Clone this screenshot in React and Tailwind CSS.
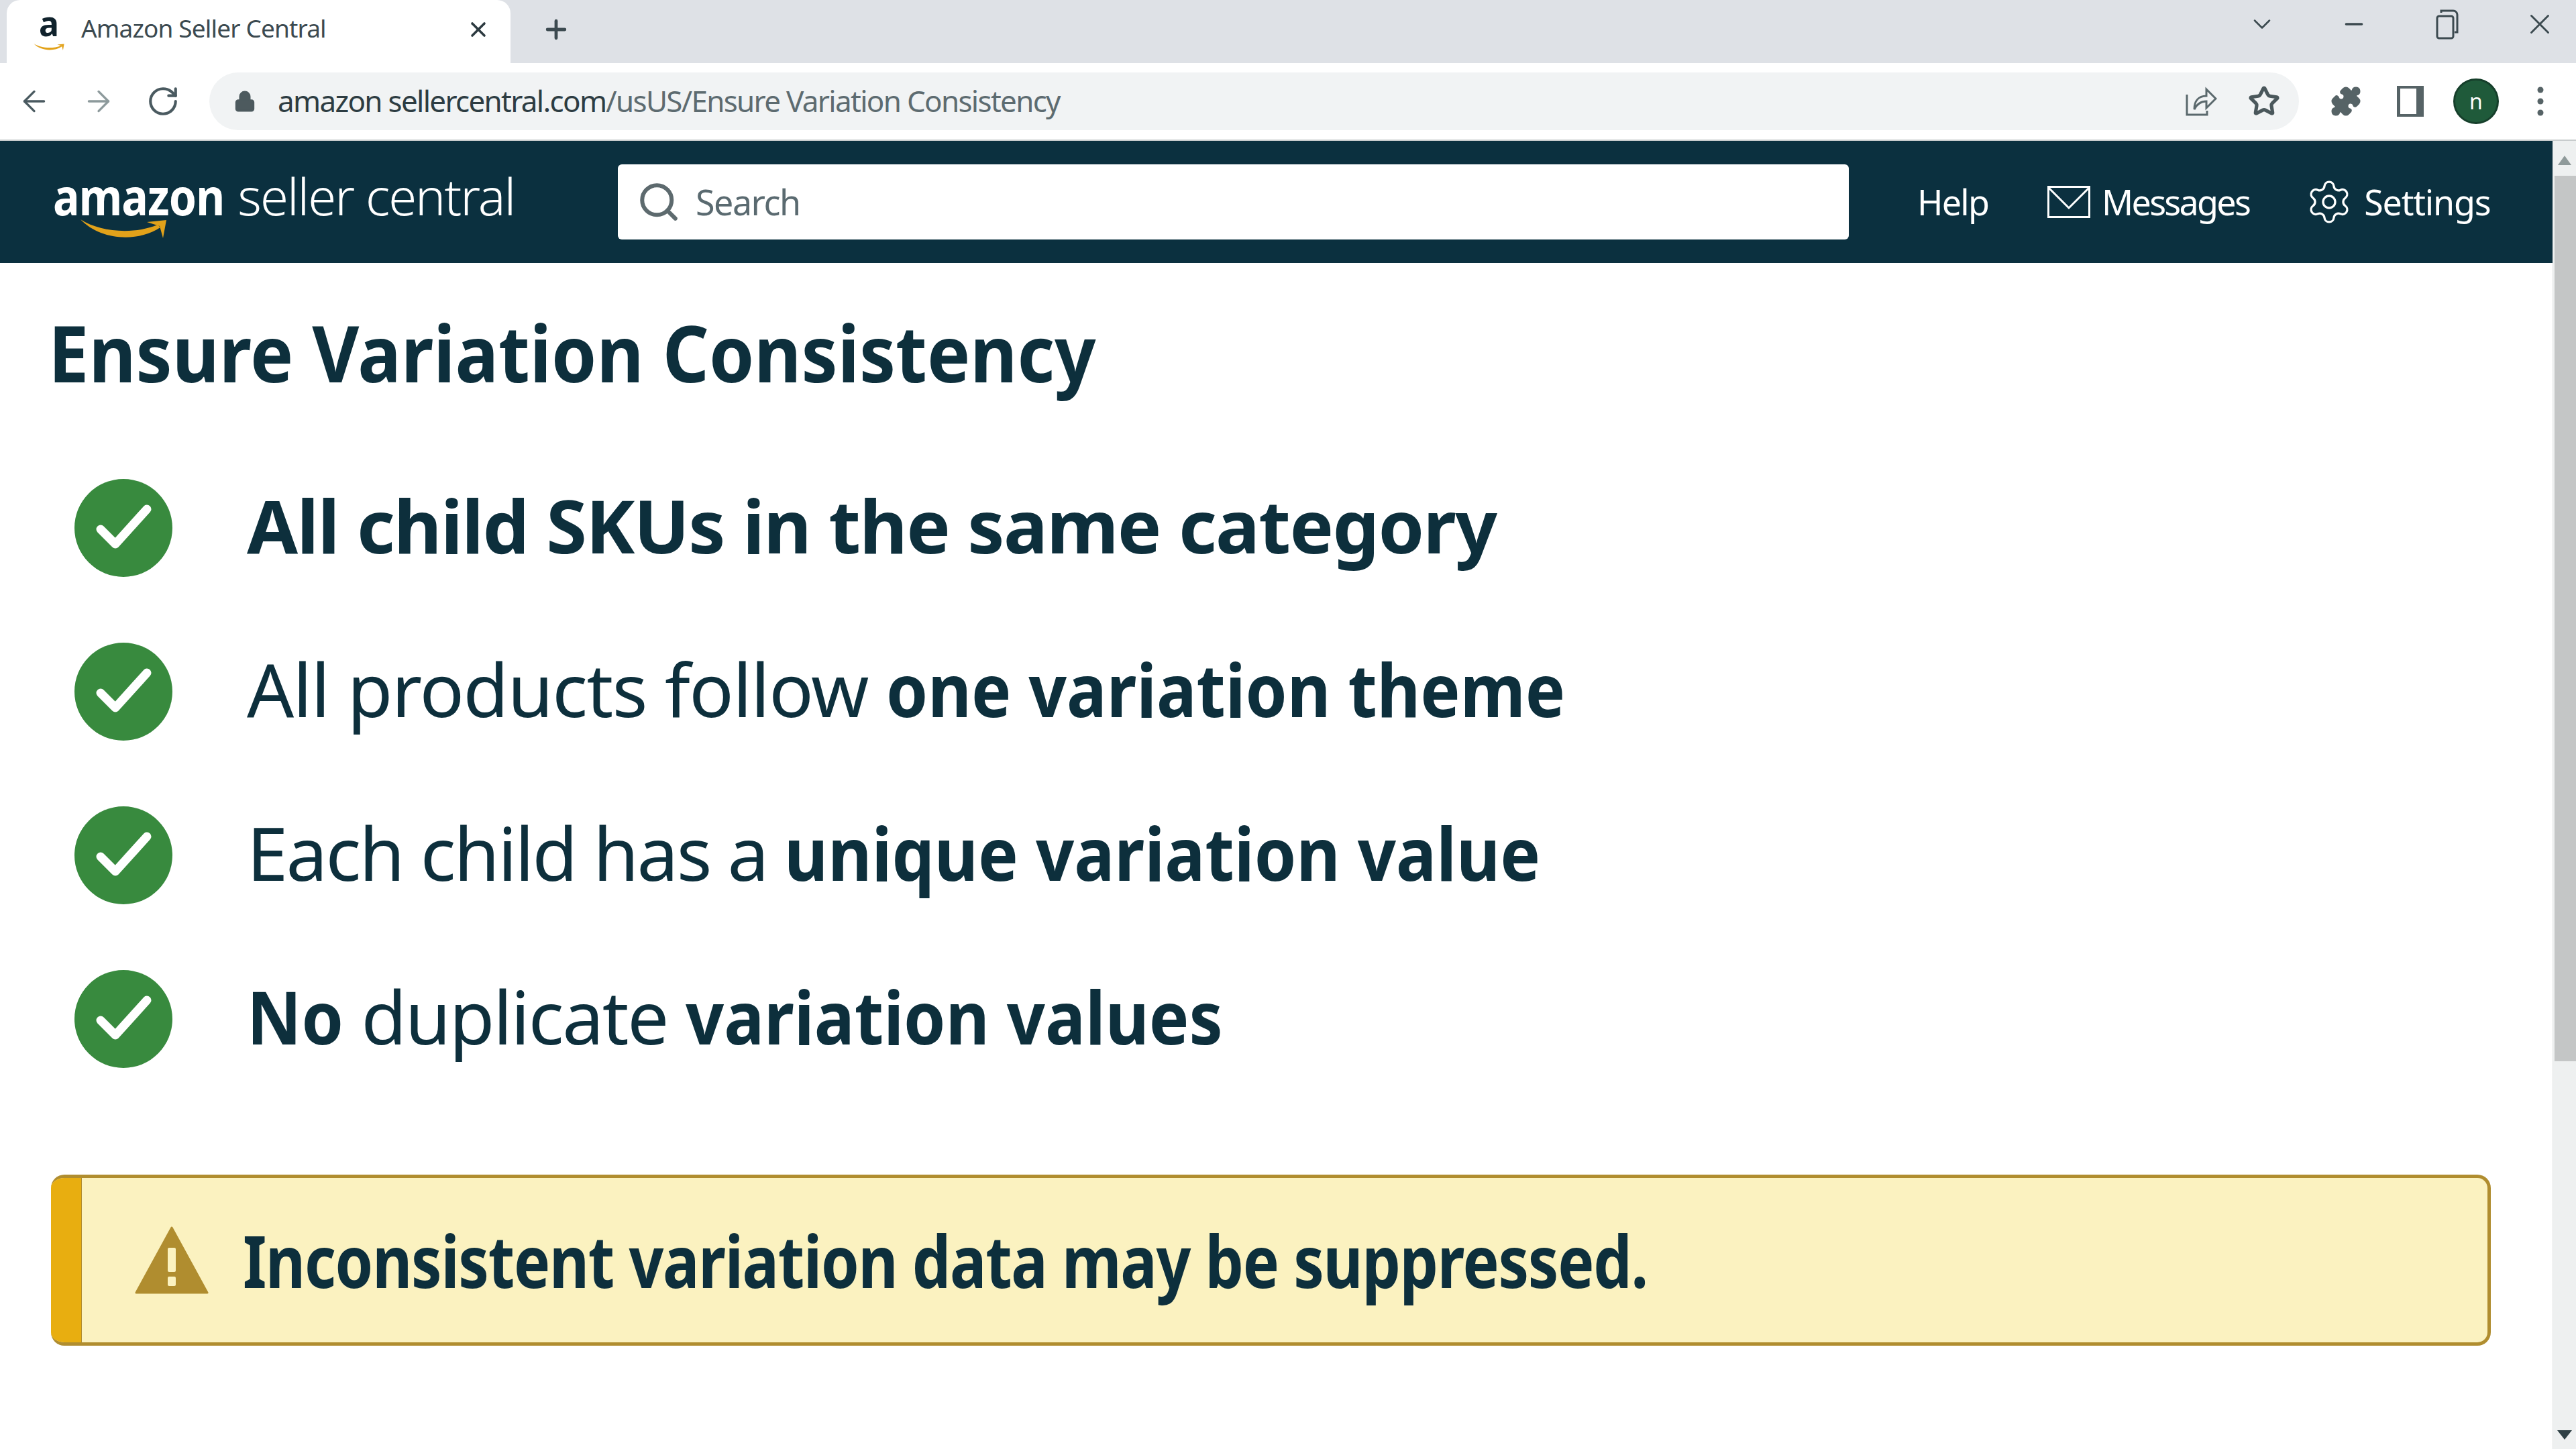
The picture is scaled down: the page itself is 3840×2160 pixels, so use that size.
import { ArrowLeft, ArrowRight, RotateCw, Lock, Star, Puzzle, Search, Settings, X, Plus, ChevronDown, Minus } from "lucide-react";

const font = "font-['Noto_Sans',sans-serif]";

function Smile({ className }) {
  return (
    <svg viewBox="0 0 130 30" className={className}>
      <path d="M1 1C30 20 80 24 116 9L120 13C85 36 30 32 1 1Z" fill="#e2a21a" />
      <path d="M100 5L129 2L124 29L119 11Z" fill="#e2a21a" />
    </svg>
  );
}

function TabStrip() {
  return (
    <div className="h-[94px] bg-[#dee1e6] flex items-center pl-[10px]">
      <div className="w-[751px] h-full bg-white rounded-t-[20px] flex items-center pl-[38px] pr-[30px]">
        <div className="relative w-[50px] h-[74px] mr-[23px] mt-[-14px] text-center">
          <span className="block text-[50px] leading-[64px] font-bold text-[#10222c]">a</span>
          <Smile className="absolute left-[2px] bottom-[0px] w-[46px] h-[14px]" />
        </div>
        <span className="text-[37px] text-[#3c4a50] tracking-[-0.85px] mt-[-10px]">Amazon Seller Central</span>
        <X className="w-[36px] h-[36px] ml-auto mt-[-6px] text-[#2c3a40]" strokeWidth={2.4} />
      </div>
      <Plus className="w-[44px] h-[44px] ml-[46px] mt-[-6px] text-[#3c4a50]" strokeWidth={2.6} />
      <div className="ml-auto flex items-center pr-[29px] mt-[-22px] text-[#3c4a50]">
        <ChevronDown className="w-[44px] h-[44px]" strokeWidth={1.4} />
        <Minus className="w-[40px] h-[40px] ml-[95px]" strokeWidth={2} />
        <svg viewBox="0 0 34 46" className="w-[34px] h-[46px] ml-[102px]" fill="none" stroke="#3c4a50" strokeWidth="3">
          <rect x="2" y="11" width="24" height="33" rx="3" />
          <path d="M8 6V3h18a6 6 0 0 1 6 6v26h-4" />
        </svg>
        <X className="w-[50px] h-[50px] ml-[96px]" strokeWidth={1.4} />
      </div>
    </div>
  );
}

function Toolbar() {
  return (
    <div className="h-[116px] bg-white flex items-center pl-[26px] border-b-2 border-[#c8cccd]">
      <ArrowLeft className="w-[50px] h-[50px] text-[#4a5a60]" strokeWidth={1.6} />
      <ArrowRight className="w-[50px] h-[50px] ml-[46px] text-[#8d9a9c]" strokeWidth={1.6} />
      <RotateCw className="w-[50px] h-[50px] ml-[46px] text-[#4a5a60]" strokeWidth={2} />
      <div className="w-[3115px] h-[86px] ml-[44px] rounded-[43px] bg-[#f1f3f4] flex items-center pl-[36px] pr-[28px]">
        <Lock className="w-[34px] h-[34px] text-[#4d5a5e]" fill="#4d5a5e" strokeWidth={2} />
        <span className="ml-[32px] mt-[-3px] text-[44px] text-[#2d3c42] tracking-[-1.7px]">
          amazon sellercentral.com<span className="text-[#5d6b70]">/usUS/Ensure Variation Consistency</span>
        </span>
        <svg viewBox="0 0 48 48" className="w-[48px] h-[48px] ml-auto" fill="none" stroke="#5a686c" strokeWidth="3">
          <path d="M3 14v30h30v-6" />
          <path d="M14 36c0-12 6-20 18-20V6l14 14-14 14V24c-8 0-14 4-18 12Z" />
        </svg>
        <Star className="w-[48px] h-[48px] ml-[46px] text-[#4a575b]" strokeWidth={2.6} />
      </div>
      <Puzzle className="w-[48px] h-[48px] ml-[46px] text-[#566366]" fill="#566366" strokeWidth={1.5} />
      <div className="w-[40px] h-[46px] ml-[52px] border-y-[4px] border-l-[5px] border-r-[11px] border-[#566366]" />
      <div className="w-[68px] h-[68px] ml-[44px] rounded-full bg-[#1f5a3a] border-[3px] border-[#163f2b] flex items-center justify-center text-white text-[32px]">n</div>
      <svg viewBox="0 0 10 44" className="w-[10px] h-[44px] ml-[57px]" fill="#566366">
        <circle cx="5" cy="5" r="4.5" /><circle cx="5" cy="22" r="4.5" /><circle cx="5" cy="39" r="4.5" />
      </svg>
    </div>
  );
}

function HeaderBar() {
  return (
    <div className="h-[182px] bg-[#0b303f] flex items-center text-white">
      <div className="w-[684px] ml-[79px] relative">
        <div className="text-[76px] leading-[76px] whitespace-nowrap mt-[-18px]">
          <span className="inline-block origin-left scale-x-[0.87] mr-[-38px] font-bold tracking-[-1px]">amazon</span> <span className="font-light tracking-[-2px]">seller central</span>
        </div>
        <Smile className="absolute left-[40px] top-[54px] w-[130px] h-[30px]" />
      </div>
      <div className="w-[1835px] h-[112px] ml-[158px] bg-white rounded-[6px] flex items-center pl-[28px] text-[#5a6a70]">
        <Search className="w-[66px] h-[66px] text-[#5d6a6e]" strokeWidth={2.2} />
        <span className="ml-[22px] text-[52px] tracking-[-1.5px]">Search</span>
      </div>
      <span className="ml-[102px] text-[52px] tracking-[-1.8px]">Help</span>
      <svg viewBox="0 0 64 48" className="w-[64px] h-[48px] ml-[88px]" fill="none" stroke="#fff" strokeWidth="3">
        <rect x="1.5" y="1.5" width="61" height="45" />
        <path d="M2 3l30 30L62 3" />
      </svg>
      <span className="ml-[17px] text-[52px] tracking-[-2.7px]">Messages</span>
      <Settings className="w-[72px] h-[72px] ml-[83px]" strokeWidth={1.1} />
      <span className="ml-[16px] text-[52px] tracking-[-1.2px]">Settings</span>
    </div>
  );
}

function CheckItem({ children }) {
  return (
    <div className="h-[244px] flex items-center pl-[39px]">
      <svg viewBox="0 0 146 146" className="w-[146px] h-[146px] shrink-0">
        <circle cx="73" cy="73" r="73" fill="#388a3e" />
        <path d="M39 75L61 97L108 45" fill="none" stroke="#fff" strokeWidth="13" strokeLinecap="round" strokeLinejoin="round" />
      </svg>
      <div className="ml-[111px] mt-[-10px] text-[110px] leading-none text-[#0d2f3c] whitespace-nowrap">{children}</div>
    </div>
  );
}

function Alert() {
  return (
    <div className="h-[255px] mt-[110px] ml-[4px] rounded-[20px] border-y-[5px] border-r-[5px] border-[#b08d2f] bg-[#fbf2c0] flex items-center overflow-hidden">
      <div className="w-[46px] h-[calc(100%+10px)] bg-[#e8ae10] shrink-0 mr-[79px] border-r border-[#b08d2f]" />
      <svg viewBox="0 0 110 102" className="w-[110px] h-[102px] shrink-0">
        <path d="M55 2L108 99H2Z" fill="#b08d2f" stroke="#b08d2f" strokeWidth="3" strokeLinejoin="round" />
        <rect x="49" y="32" width="12" height="36" rx="2" fill="#fbf2c0" />
        <rect x="49" y="75" width="12" height="14" rx="2" fill="#fbf2c0" />
      </svg>
      <span className="ml-[51px] origin-left scale-x-[0.842] text-[108px] leading-none font-bold text-[#0d2f3c] tracking-[-1.5px] whitespace-nowrap">
        Inconsistent variation data may be suppressed.
      </span>
    </div>
  );
}

function Scrollbar() {
  return (
    <div className="w-[35px] bg-[#eef0f0] flex flex-col items-center border-l border-[#e2e4e4]">
      <div className="w-0 h-0 mt-[22px] border-x-[10px] border-x-transparent border-b-[14px] border-b-[#8f9a9a]" />
      <div className="w-full h-[1320px] mt-[16px] ml-[4px] bg-[#c4c6c6]" />
      <div className="w-0 h-0 mt-auto mb-[14px] border-x-[11px] border-x-transparent border-t-[14px] border-t-[#2f4045]" />
    </div>
  );
}

export default function App() {
  return (
    <div className={`${font} w-[3840px] h-[2160px] flex flex-col overflow-hidden bg-white`}>
      <TabStrip />
      <Toolbar />
      <div className="flex-1 flex min-h-0">
        <div className="flex-1 flex flex-col min-w-0">
          <HeaderBar />
          <div className="pl-[72px] pr-[92px]">
            <h1 className="mt-[63px] h-[140px] origin-left scale-x-[0.93] text-[116px] leading-[140px] font-bold text-[#0d2f3c] whitespace-nowrap">
              Ensure Variation Consistency
            </h1>
            <div className="mt-[70px]">
              <CheckItem><b className="font-bold tracking-[-1.6px]">All child SKUs in the same category</b></CheckItem>
              <CheckItem>
                <span className="tracking-[-1.5px]">All products follow </span>
                <b className="inline-block origin-left scale-x-[0.905] mr-[-106px] font-bold">one variation theme</b>
              </CheckItem>
              <CheckItem>
                <span className="tracking-[-2.7px]">Each child has a </span>
                <b className="inline-block origin-left scale-x-[0.912] mr-[-108px] font-bold">unique variation value</b>
              </CheckItem>
              <CheckItem>
                <b className="inline-block origin-left scale-x-[0.91] mr-[-14px] font-bold">No</b>
                <span className="tracking-[-2.2px]"> duplicate </span>
                <b className="inline-block origin-left scale-x-[0.91] mr-[-80px] font-bold">variation values</b>
              </CheckItem>
            </div>
            <Alert />
          </div>
        </div>
        <Scrollbar />
      </div>
    </div>
  );
}
